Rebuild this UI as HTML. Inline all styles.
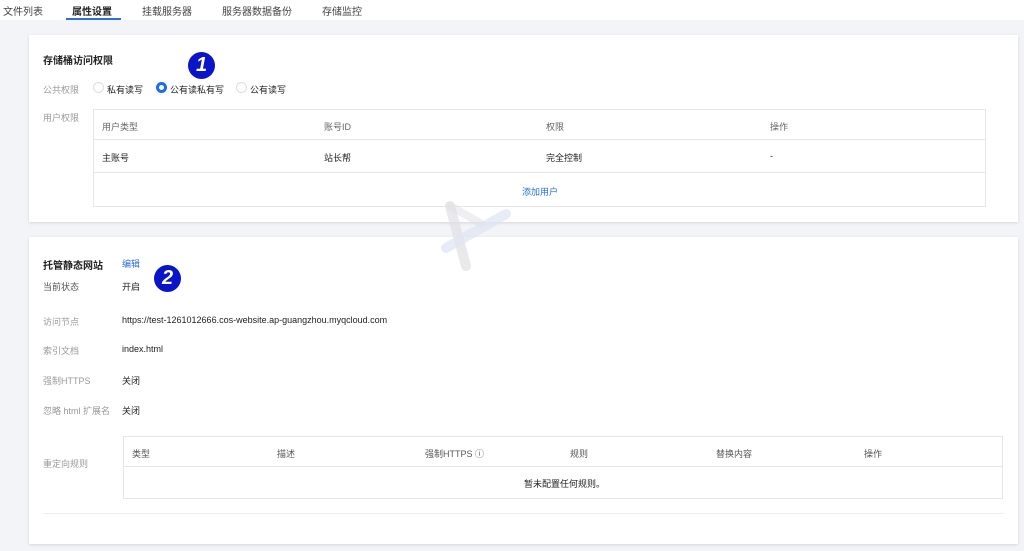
<!DOCTYPE html>
<html><head><meta charset="utf-8"><style>
*{margin:0;padding:0;box-sizing:border-box}
body{width:1024px;height:551px;background:#f3f4f7;font-family:"Liberation Sans","Noto Sans CJK SC",sans-serif;font-size:9px;color:#222;position:relative;overflow:hidden}
.a{position:absolute;white-space:nowrap}
.nav{position:absolute;left:0;top:0;width:1024px;height:20px;background:#fff}
.card{position:absolute;left:29px;width:989px;background:#fff;box-shadow:0 1px 3px rgba(0,0,0,.12)}
.g{color:#999}
.tb{position:absolute;border:1px solid #e6e6e6;background:#fff}
.hl{position:absolute;left:0;right:0;height:1px;background:#e6e6e6}
.rd{position:absolute;width:11px;height:11px;border-radius:50%;border:1px solid #ddd;background:#fff}
.num{position:absolute;width:27px;height:27px;border-radius:50%;background:#0a14c8;color:#fff;font-weight:bold;font-size:20px;font-style:italic;text-align:center;line-height:27px}
</style></head><body>
<div class="nav"></div>
<div class="a" style="left:3px;top:3px;font-size:10px;color:#444">文件列表</div>
<div class="a" style="left:72px;top:3px;font-size:10px;font-weight:bold">属性设置</div>
<div style="position:absolute;left:66px;top:18px;width:55px;height:2px;background:#2a6fe0"></div>
<div class="a" style="left:142px;top:3px;font-size:10px;color:#444">挂载服务器</div>
<div class="a" style="left:222px;top:3px;font-size:10px;color:#444">服务器数据备份</div>
<div class="a" style="left:322px;top:3px;font-size:10px;color:#444">存储监控</div>

<div class="card" style="top:35px;height:187px"></div>
<div class="a" style="left:43px;top:52px;font-weight:bold;font-size:10px">存储桶访问权限</div>
<div class="num" style="left:188px;top:52px">1</div>
<div class="a g" style="left:43px;top:83px">公共权限</div>
<div class="rd" style="left:93px;top:82px"></div><div class="a" style="left:107px;top:83px">私有读写</div>
<div class="rd" style="left:156px;top:82px;border:3px solid #1b6cf0"></div><div class="a" style="left:170px;top:83px">公有读私有写</div>
<div class="rd" style="left:236px;top:82px"></div><div class="a" style="left:250px;top:83px">公有读写</div>
<div class="a g" style="left:43px;top:111px">用户权限</div>
<div class="tb" style="left:93px;top:109px;width:893px;height:98px">
<div class="hl" style="top:29px"></div><div class="hl" style="top:62px"></div>
<div class="a" style="left:8px;top:10px;color:#666">用户类型</div>
<div class="a" style="left:230px;top:10px;color:#666">账号ID</div>
<div class="a" style="left:452px;top:10px;color:#666">权限</div>
<div class="a" style="left:676px;top:10px;color:#666">操作</div>
<div class="a" style="left:8px;top:41px">主账号</div>
<div class="a" style="left:230px;top:41px">站长帮</div>
<div class="a" style="left:452px;top:41px">完全控制</div>
<div class="a" style="left:676px;top:41px">-</div>
<div class="a" style="left:428px;top:75px;color:#2a6fe0">添加用户</div>
</div>

<div class="card" style="top:237px;height:307px"></div>
<div class="a" style="left:43px;top:257px;font-weight:bold;font-size:10px">托管静态网站</div>
<div class="a" style="left:122px;top:257px;color:#2a6fe0">编辑</div>
<div class="num" style="left:154px;top:265px">2</div>
<div class="a" style="left:43px;top:280px;color:#555">当前状态</div><div class="a" style="left:122px;top:280px">开启</div>
<div class="a g" style="left:43px;top:315px">访问节点</div><div class="a" style="left:122px;top:315px">https://test-1261012666.cos-website.ap-guangzhou.myqcloud.com</div>
<div class="a g" style="left:43px;top:344px">索引文档</div><div class="a" style="left:122px;top:344px">index.html</div>
<div class="a g" style="left:43px;top:374px">强制HTTPS</div><div class="a" style="left:122px;top:374px">关闭</div>
<div class="a g" style="left:43px;top:404px">忽略 html 扩展名</div><div class="a" style="left:122px;top:404px">关闭</div>
<div class="a g" style="left:43px;top:457px">重定向规则</div>
<div class="tb" style="left:123px;top:436px;width:880px;height:63px">
<div class="hl" style="top:29px"></div>
<div class="a" style="left:8px;top:10px;color:#555">类型</div>
<div class="a" style="left:153px;top:10px;color:#555">描述</div>
<div class="a" style="left:301px;top:10px;color:#555">强制HTTPS ⓘ</div>
<div class="a" style="left:446px;top:10px;color:#555">规则</div>
<div class="a" style="left:592px;top:10px;color:#555">替换内容</div>
<div class="a" style="left:740px;top:10px;color:#555">操作</div>
<div class="a" style="left:400px;top:40px">暂未配置任何规则。</div>
</div>
<div style="position:absolute;left:43px;top:513px;width:961px;height:1px;background:#eee"></div>

<svg style="position:absolute;left:436px;top:200px" width="80" height="75" viewBox="0 0 80 75">
<path d="M14 6 L30 66" stroke="#e0e0e4" stroke-width="10" stroke-linecap="round" fill="none" opacity=".7"/>
<path d="M14 6 L46 24" stroke="#e0e0e4" stroke-width="8" stroke-linecap="round" fill="none" opacity=".5"/>
<path d="M10 48 L70 14" stroke="#dde4f2" stroke-width="10" stroke-linecap="round" fill="none" opacity=".7"/>
</svg>
</body></html>
